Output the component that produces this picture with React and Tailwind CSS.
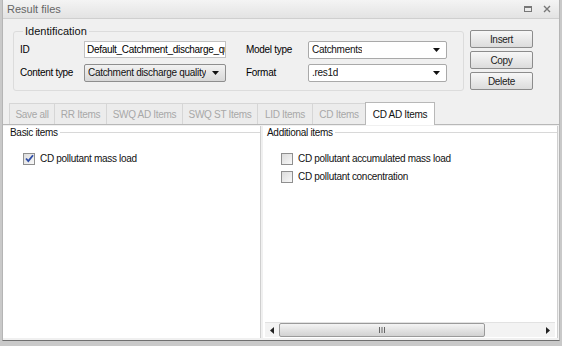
import React from "react";

const font = { fontFamily: '"Liberation Sans", Arial, sans-serif' };

function Arrow() {
  return (
    <svg width="7" height="4" viewBox="0 0 7 4" className="shrink-0">
      <path d="M0 0h7L3.5 4z" fill="#111" />
    </svg>
  );
}

function Select({ value, gray, width }) {
  return (
    <div
      className={`h-[18px] ${width} flex items-center justify-between pl-[3px] pr-[6px] border rounded-[2px] ${
        gray
          ? "border-[#8e8e8e] bg-gradient-to-b from-[#f2f2f2] to-[#d8d8d8]"
          : "border-[#a9a9a9] bg-white"
      } text-[#111]`}
    >
      <span className="whitespace-nowrap overflow-hidden">{value}</span>
      <Arrow />
    </div>
  );
}

function Button({ children }) {
  return (
    <button className="w-[63px] h-[18px] flex items-center justify-center rounded-[2px] border border-[#8c8c8c] bg-gradient-to-b from-[#f7f7f7] to-[#dcdcdc] text-[#222]">
      {children}
    </button>
  );
}

function Checkbox({ checked, label }) {
  return (
    <div className="flex items-center gap-[5px] h-[17px]">
      <div className="w-[12px] h-[12px] border border-[#8f8f8f] bg-gradient-to-br from-[#dcdcdc] to-[#f8f8f8] flex items-center justify-center">
        {checked && (
          <svg width="9" height="9" viewBox="0 0 9 9">
            <path d="M1 4.5l2.3 2.5L8 1.2" fill="none" stroke="#2f4ea8" strokeWidth="1.8" />
          </svg>
        )}
      </div>
      <span className="text-[#111]">{label}</span>
    </div>
  );
}

const tabs = [
  ["Save all", "w-[46px]"],
  ["RR Items", "w-[53px]"],
  ["SWQ AD Items", "w-[77px]"],
  ["SWQ ST Items", "w-[76px]"],
  ["LID Items", "w-[56px]"],
  ["CD Items", "w-[54px]"],
];

export default function App() {
  return (
    <div className="w-[562px] h-[346px] bg-[#c9c9c9] text-[10px] tracking-[-0.3px] overflow-hidden" style={font}>
      <div className="h-[341px] mx-[2px] flex flex-col bg-[#f0f0f0] border-x border-[#b5b5b5] border-b border-b-[#6f6f6f]">
        {/* title */}
        <div className="h-[19px] shrink-0 flex items-center justify-between pl-[4px] pr-[8px] bg-gradient-to-b from-[#f4f4f4] to-[#e3e3e3] border-b border-[#cfcfcf]">
          <span className="text-[#666] text-[11px] tracking-normal">Result files</span>
          <div className="flex items-center gap-[11px]">
            <div className="w-[8px] h-[6px] border-[1.5px] border-[#777] border-t-[2px]" />
            <svg width="8" height="8" viewBox="0 0 8 8">
              <path d="M1 1l6 6M7 1l-6 6" stroke="#777" strokeWidth="1.4" />
            </svg>
          </div>
        </div>

        {/* top area */}
        <div className="flex items-start pl-[10px] pt-[4px] h-[84px] shrink-0">
          <fieldset className="w-[451px] h-[68px] border border-[#dcdcdc] rounded-[3px] pl-[6px] pr-[15px] pt-[1px] flex flex-col gap-[5px]">
            <legend className="px-[2px] ml-[3px] text-[#111] text-[11px] tracking-normal">Identification</legend>
            <div className="flex items-center">
              <span className="w-[64px]">ID</span>
              <div className="w-[142px] h-[17px] border border-[#c2c2c2] bg-white pl-[2px] flex items-center overflow-hidden whitespace-nowrap">
                Default_Catchment_discharge_qu
              </div>
              <span className="w-[62px] ml-[20px]">Model type</span>
              <Select value="Catchments" width="w-[139px]" />
            </div>
            <div className="flex items-center">
              <span className="w-[64px]">Content type</span>
              <Select value="Catchment discharge quality" gray width="w-[142px]" />
              <span className="w-[62px] ml-[20px]">Format</span>
              <Select value=".res1d" width="w-[139px]" />
            </div>
          </fieldset>
          <div className="ml-[6px] mt-[7px] flex flex-col gap-[3px]">
            <Button>Insert</Button>
            <Button>Copy</Button>
            <Button>Delete</Button>
          </div>
        </div>

        {/* tabs */}
        <div className="flex items-end pl-[6px] h-[21px] shrink-0">
          {tabs.map(([t, w]) => (
            <div
              key={t}
              className={`${w} h-[21px] flex items-center justify-center border border-b-0 border-[#d6d6d6] -ml-px first:ml-0 bg-[#ececec] text-[#a8a8a8]`}
            >
              {t}
            </div>
          ))}
          <div className="w-[70px] h-[23px] flex items-center justify-center border border-b-0 border-[#b8b8b8] -ml-px bg-white text-[#111] relative top-px">
            CD AD Items
          </div>
        </div>

        {/* content */}
        <div className="flex-1 flex border-t border-[#b8b8b8] bg-[#f0f0f0] pt-[1px]">
          <div className="w-[258px] bg-white border-r border-[#cfcfcf] flex flex-col mb-[2px]">
            <div className="flex items-center pl-[7px] h-[13px]">
              <span className="pr-[2px] text-[#111]">Basic items</span>
              <div className="flex-1 border-t border-[#d8d8d8]" />
            </div>
            <div className="pl-[20px] pt-[11px]">
              <Checkbox checked label="CD pollutant mass load" />
            </div>
          </div>
          <div className="w-[2px]" />
          <div className="flex-1 bg-white border-r border-[#cfcfcf] mr-[1px] flex flex-col mb-[2px]">
            <div className="flex items-center pl-[4px] h-[13px]">
              <span className="pr-[2px] text-[#111]">Additional items</span>
              <div className="flex-1 border-t border-[#d8d8d8]" />
            </div>
            <div className="pl-[18px] pt-[11px] flex flex-col gap-[1px]">
              <Checkbox label="CD pollutant accumulated mass load" />
              <Checkbox label="CD pollutant concentration" />
            </div>
            <div className="mt-auto mb-[1px] mx-[2px] h-[15px] flex items-center bg-[#f3f3f3] border-t border-[#e2e2e2]">
              <div className="w-[14px] flex justify-center">
                <svg width="4" height="7" viewBox="0 0 4 7"><path d="M4 0v7L0 3.5z" fill="#222" /></svg>
              </div>
              <div className="w-[206px] h-[14px] rounded-[2px] border border-[#9a9a9a] bg-gradient-to-b from-[#f4f4f4] to-[#d2d2d2] flex items-center justify-center">
                <svg width="6" height="6" viewBox="0 0 6 6"><path d="M0.5 0v6M3 0v6M5.5 0v6" stroke="#666" strokeWidth="1" /></svg>
              </div>
              <div className="flex-1" />
              <div className="w-[14px] flex justify-center">
                <svg width="4" height="7" viewBox="0 0 4 7"><path d="M0 0v7L4 3.5z" fill="#222" /></svg>
              </div>
            </div>
          </div>
        </div>
      </div>
    </div>
  );
}
